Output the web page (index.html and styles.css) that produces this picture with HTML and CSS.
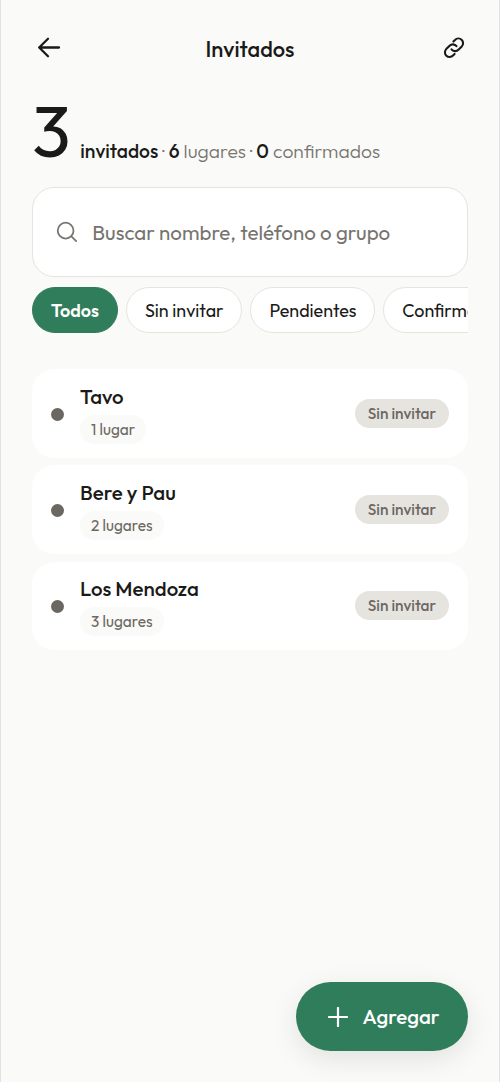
FILE: index.html
```html
<!DOCTYPE html>
<html lang="es">
<head>
<meta charset="utf-8">
<meta name="viewport" content="width=device-width">
<title>Invitados</title>
<link rel="stylesheet" href="styles.css">
</head>
<body>
<main class="app">
  <header class="topbar">
    <svg class="back" viewBox="0 0 24 24"><path d="M22 11.5H2.2M11 2.7 2.2 11.5l8.8 8.8"/></svg>
    <h1 class="title">Invitados</h1>
    <svg class="link" viewBox="0 0 24 24"><path d="M11.4 5.6l1.6-1.6a4.6 4.6 0 0 1 6.8 6.4l-3.4 3.4a4.6 4.6 0 0 1-6.9-.5"/><path d="M12.6 17.9l-1.6 1.6a4.6 4.6 0 0 1-6.8-6.4l3.4-3.4a4.6 4.6 0 0 1 6.9.5"/></svg>
  </header>
  <section class="summary">
    <span class="count">3</span>
    <p class="stats"><b>invitados</b> · <b>6</b> lugares · <b>0</b> confirmados</p>
  </section>
  <div class="search">
    <svg viewBox="0 0 24 24"><circle cx="10.5" cy="10.5" r="8.6"/><path d="M16.8 16.8 22 22"/></svg>
    <span class="placeholder">Buscar nombre, teléfono o grupo</span>
  </div>
  <nav class="filters">
    <span class="chip chip-on">Todos</span>
    <span class="chip">Sin invitar</span>
    <span class="chip">Pendientes</span>
    <span class="chip">Confirmados</span>
  </nav>
  <ul class="guests">
    <li class="guest"><span class="dot"></span><div class="info"><span class="name">Tavo</span><span class="seats">1 lugar</span></div><span class="status">Sin invitar</span></li>
    <li class="guest"><span class="dot"></span><div class="info"><span class="name">Bere y Pau</span><span class="seats">2 lugares</span></div><span class="status">Sin invitar</span></li>
    <li class="guest"><span class="dot"></span><div class="info"><span class="name">Los Mendoza</span><span class="seats">3 lugares</span></div><span class="status">Sin invitar</span></li>
  </ul>
  <button class="add"><svg viewBox="0 0 20 20"><path d="M10 1v18M1 10h18"/></svg>Agregar</button>
</main>
</body>
</html>
```
FILE: styles.css
```css
* { box-sizing: border-box; }
body {
  margin: 0;
  background: #fafaf8;
  color: #1a1a18;
  font-family: Outfit, Inter, sans-serif;
}
.app {
  position: relative;
  min-height: 1082px;
  padding: 24px 31px;
  border: solid #e2e2df;
  border-width: 0 1px;
}
svg { fill: none; stroke: currentColor; stroke-linecap: round; stroke-linejoin: round; flex: none; }
.topbar { display: flex; align-items: center; justify-content: space-between; height: 48px; padding: 0 2px 0 5px; }
.back { width: 24px; height: 24px; stroke-width: 2.3; }
.link { width: 24px; height: 24px; stroke-width: 2.1; }
.title { margin: 0 3px 0 0; padding-top: 1px; font-size: 21.8px; font-weight: 500; }
.summary { display: flex; align-items: baseline; height: 115px; padding-top: 17px; }
.count { width: 48px; font-size: 72px; line-height: 84px; }
.stats { margin: 0; padding-left: .3px; font-size: 19.25px; color: #77746f; font-weight: 300; white-space: nowrap; transform: translateY(.6px); }
.stats b { color: #1a1a18; font-weight: 500; }
.search { display: flex; align-items: center; height: 90px; padding: 0 23px; border: 1px solid #e5e4df; border-radius: 22px; background: #fff; color: #77746f; }
.search svg { width: 22px; height: 22px; margin-right: 14.3px; stroke-width: 1.9; }
.placeholder { font-size: 20.52px; }
.filters { display: flex; gap: 8px; margin-top: 10.4px; overflow: hidden; }
.chip { flex: none; height: 46px; padding: 0 17.9px; border: 1px solid #e5e4df; border-radius: 23px; background: #fff; font-size: 17.92px; line-height: 45px; }
.chip-on { padding: 0 18px; background: #2f7d5b; border-color: #2f7d5b; color: #fff; font-weight: 600; }
.guests { display: grid; gap: 7.5px; margin: 36px 0 0; padding: 0; list-style: none; }
.guest { display: flex; align-items: center; height: 88.6px; padding: 0 19px; border-radius: 22px; background: #fff; }
.dot { width: 13px; height: 13px; margin: 1px 16px 0 0; border-radius: 50%; background: #6b6862; }
.info { display: flex; flex-direction: column; align-items: flex-start; gap: 5px; }
.name { font-size: 20.48px; line-height: 26px; font-weight: 500; }
.seats { height: 29px; padding: 0 11.1px; border-radius: 15px; background: #fafaf8; color: #6b6862; font-size: 15.36px; line-height: 30px; }
.status { margin-left: auto; height: 29px; padding: 0 13px; border-radius: 15px; background: #e6e4df; color: #6b6862; font-size: 15.36px; line-height: 30px; font-weight: 500; }
.add { position: absolute; right: 31px; bottom: 31px; display: flex; align-items: center; gap: 14.5px; height: 69px; padding: 0 28.5px 0 32.5px; border: 0; border-radius: 35px; background: #2f7d5b; color: #fff; font: 500 20.48px Outfit, Inter, sans-serif; box-shadow: 0 8px 28px rgba(0,0,0,.1); }
.add svg { width: 20px; height: 20px; stroke-width: 2.2; }
```
